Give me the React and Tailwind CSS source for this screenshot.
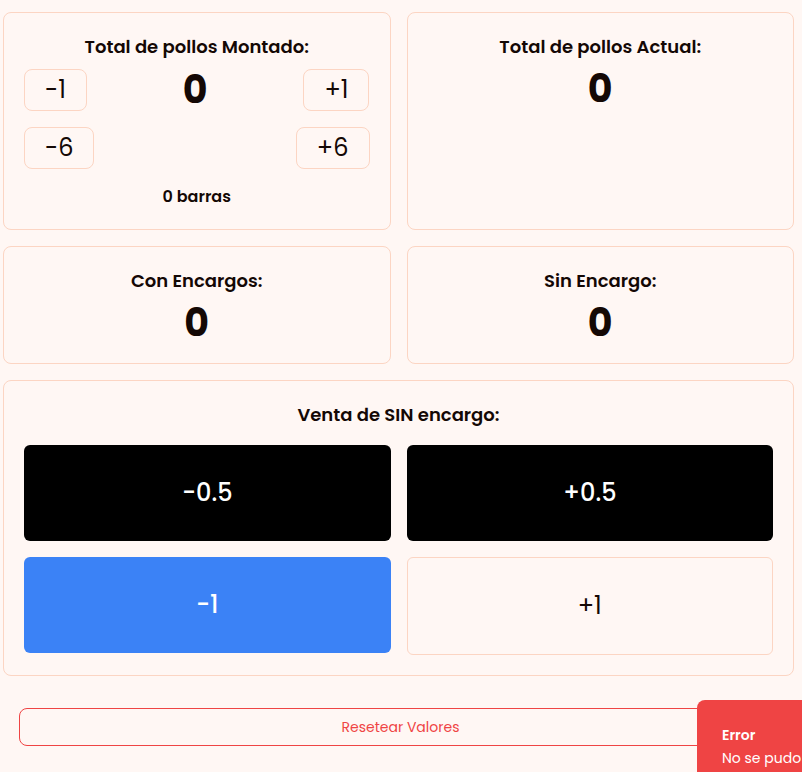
import React from "react";

const font = { fontFamily: "Poppins, Inter, 'Noto Sans', sans-serif" };

function Card({ children, className = "" }) {
  return (
    <div className={`rounded-lg border border-[#fcd5c3] bg-[#fff7f4] p-5 ${className}`}>
      {children}
    </div>
  );
}

function SmallBtn({ children }) {
  return (
    <button className="rounded-lg border border-[#fcd5c3] bg-[#fff7f4] px-5 py-1 text-2xl leading-8 text-[#140805]">
      {children}
    </button>
  );
}

export default function App() {
  return (
    <div className="min-h-screen bg-[#fff7f4] text-[#140805]" style={font}>
      <div className="pt-3 pl-[3px] pr-2 pb-6">
        <div className="grid grid-cols-2 gap-4">
          <Card>
            <h2 className="text-center text-lg leading-7 font-semibold">Total de pollos Montado:</h2>
            <div className="mt-2 flex items-center justify-between">
              <SmallBtn>-1</SmallBtn>
              <div className="text-[38px] leading-10 font-bold">0</div>
              <SmallBtn>+1</SmallBtn>
            </div>
            <div className="mt-4 flex items-center justify-between">
              <SmallBtn>-6</SmallBtn>
              <SmallBtn>+6</SmallBtn>
            </div>
            <p className="mt-4 text-center text-base leading-6 font-semibold">0 barras</p>
          </Card>
          <Card>
            <h2 className="text-center text-lg leading-7 font-semibold">Total de pollos Actual:</h2>
            <div className="mt-2 text-center text-[38px] leading-10 font-bold">0</div>
          </Card>
          <Card>
            <h2 className="text-center text-lg leading-7 font-semibold">Con Encargos:</h2>
            <div className="mt-2 text-center text-[38px] leading-10 font-bold">0</div>
          </Card>
          <Card>
            <h2 className="text-center text-lg leading-7 font-semibold">Sin Encargo:</h2>
            <div className="mt-2 text-center text-[38px] leading-10 font-bold">0</div>
          </Card>
          <Card className="col-span-2">
            <h2 className="text-center text-lg leading-7 font-semibold">Venta de SIN encargo:</h2>
            <div className="mt-4 grid grid-cols-2 items-start gap-4">
              <button className="rounded-md bg-black py-8 text-2xl leading-8 font-medium text-white">-0.5</button>
              <button className="rounded-md bg-black py-8 text-2xl leading-8 font-medium text-white">+0.5</button>
              <button className="rounded-md bg-[#3b82f6] py-8 text-2xl leading-8 font-medium text-white">-1</button>
              <button className="rounded-md border border-[#fcd5c3] bg-[#fff7f4] py-8 text-2xl leading-8 text-[#140805]">+1</button>
            </div>
          </Card>
        </div>
        <div className="mt-8 ml-4 mr-3">
          <button className="w-full rounded-lg border border-[#ef4444] py-2 text-sm leading-5 text-[#ef4444]">
            Resetear Valores
          </button>
        </div>
      </div>
      <div className="fixed left-[697px] top-[700px] w-[360px] rounded-tl-lg bg-[#ef4444] pl-[25px] pt-[25px] pb-6 text-white">
        <div className="text-sm leading-5 font-semibold">Error</div>
        <div className="mt-[3px] whitespace-nowrap text-sm leading-5">No se pudo conectar con el servidor</div>
      </div>
    </div>
  );
}
